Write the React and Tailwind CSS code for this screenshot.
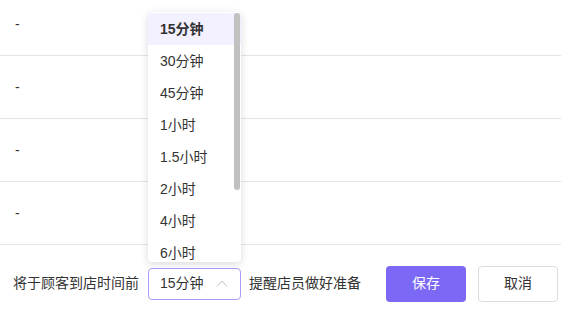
import React from "react";

const options = ["15分钟", "30分钟", "45分钟", "1小时", "1.5小时", "2小时", "4小时", "6小时"];

export default function App() {
  return (
    <div className="relative w-[561px] h-[316px] overflow-hidden bg-white text-[14px] text-[#333] font-['Liberation_Sans','Noto_Sans_CJK_SC',sans-serif]">
      <div className="flex flex-col">
        {[0, 1, 2, 3].map((i) => (
          <div
            key={i}
            className={`flex items-center h-[63px] pl-[15px] border-b border-[#e4e4e4] ${i === 0 ? "-mt-[7px]" : ""}`}
          >
            -
          </div>
        ))}
      </div>

      <div className="flex items-center h-[72px] pt-[5px] pl-[13px] whitespace-nowrap">
        <span>将于顾客到店时间前</span>
        <div className="ml-[9px] flex items-center justify-between w-[93px] h-[32px] pl-[11px] pr-[12px] border border-[#ab9ef7] rounded-[4px]">
          <span>15分钟</span>
          <svg width="12" height="7" viewBox="0 0 12 7" fill="none">
            <path d="M1 6.5L6 1l5 5.5" stroke="#c4c4c4" strokeWidth="1" />
          </svg>
        </div>
        <span className="ml-[8px]">提醒店员做好准备</span>
        <button className="ml-[25px] w-[80px] h-[36px] rounded-[4px] bg-[#7b68f5] text-white">保存</button>
        <button className="ml-[12px] w-[80px] h-[36px] rounded-[4px] border border-[#dcdcdc] bg-white">取消</button>
      </div>

      <div className="absolute left-[148px] top-[12px] w-[93px] h-[250px] overflow-hidden bg-white rounded-[4px] shadow-[0_2px_8px_rgba(0,0,0,0.15)]">
        <div className="flex flex-col pt-px">
          {options.map((o, i) => (
            <div
              key={o}
              className={`flex items-center h-[32px] pl-[12px] whitespace-nowrap ${i === 0 ? "bg-[#f3f0ff] font-bold" : ""}`}
            >
              {o}
            </div>
          ))}
        </div>
        <div className="absolute right-[1px] top-[1px] w-[6px] h-[177px] rounded-full bg-[#c1c1c1]" />
      </div>
    </div>
  );
}
